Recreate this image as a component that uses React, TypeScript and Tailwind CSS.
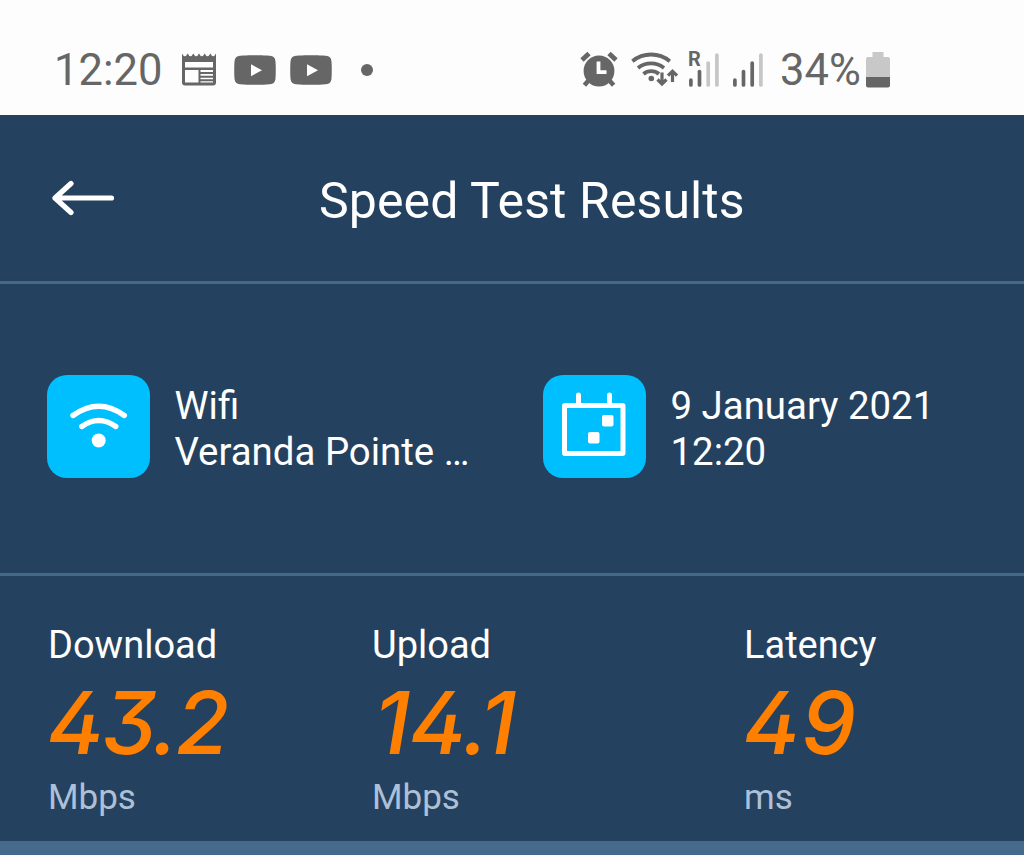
import type { ReactNode } from 'react';

type Metric = {
    label: string;
    value: string;
    unit: string;
    width: string;
    valueClass: string;
};

const metrics: Metric[] = [
    { label: 'Download', value: '43.2', unit: 'Mbps', width: 'w-[324px]', valueClass: '-ml-px tracking-[-2.5px]' },
    { label: 'Upload', value: '14.1', unit: 'Mbps', width: 'w-[372px]', valueClass: 'pl-[2px] tracking-[-1px]' },
    { label: 'Latency', value: '49', unit: 'ms', width: 'w-[220px]', valueClass: '-ml-px tracking-[1px]' },
];

function NewsIcon() {
    return (
        <svg width="34" height="33" viewBox="0 0 34 33" fill="#666">
            <path
                fillRule="evenodd"
                d="M0 .5Q2.800 6 5.700 .5 8.500 6 11.300 .5 14.200 6 17 .5 19.800 6 22.700 .5 25.500 6 28.300 .5 31.200 6 34 .5V29.500a3 3 0 0 1-3 3H3a3 3 0 0 1-3-3zM3 9v5.500h28V9zM3 17v12.500h13.500V17zM18.500 17v2H31V17zM18.500 21v1.700H31V21zM18.500 24.700v1.600H31v-1.600zM18.500 28.200v1.300H31v-1.300z"
            />
        </svg>
    );
}

function VideoIcon() {
    return (
        <svg width="42" height="30" viewBox="0 0 42 30">
            <path
                fill="#666"
                d="M6 .8C11 .1 31 .1 36 .8c3.500.5 5 2 5.400 5 .5 4 .5 14.400 0 18.400-.4 3-1.900 4.500-5.400 5-5 .7-25 .7-30 0-3.500-.5-5-2-5.400-5-.5-4-.5-14.400 0-18.400C1 2.800 2.500 1.300 6 .8z"
            />
            <path fill="#fff" d="M17 9.300l11 5.900-11 6z" />
        </svg>
    );
}

function AlarmIcon() {
    return (
        <svg width="38" height="37" viewBox="0 0 38 37" fill="none" stroke="#666">
            <circle cx="19" cy="20" r="15.400" fill="#666" stroke="none" />
            <path d="M2 9l7-6.600M36 9l-7-6.600" strokeWidth="4.800" />
            <path d="M9 29l-4.600 5.200M29 29l4.600 5.200" strokeWidth="4.600" />
            <path d="M18.500 10.500v10.700h8" stroke="#fff" strokeWidth="3.800" />
        </svg>
    );
}

function WifiStatusIcon() {
    return (
        <svg width="48" height="37" viewBox="0 0 48 37" fill="none" stroke="#666" strokeWidth="3.800">
            <path d="M1.400 10.200a29.500 29.500 0 0 1 37.400 0" />
            <path d="M7 17a20.500 20.500 0 0 1 26 0" />
            <path d="M12.500 23a12 12 0 0 1 15.400 0" />
            <circle cx="20.300" cy="27.500" r="2.800" fill="#666" stroke="none" />
            <path d="M31 21.500v11.500M26.500 28.500l4.500 4.500 4.500-4.500" strokeWidth="3.200" />
            <path d="M41.500 31V20.500M37 24.700l4.500-4.500 4.500 4.500" strokeWidth="3.200" />
        </svg>
    );
}

function SignalBars({ active }: { active: number }) {
    const bars = [
        { x: 1.9, top: 28 },
        { x: 10.5, top: 19.5 },
        { x: 19.2, top: 11 },
        { x: 27.9, top: 3 },
    ];

    return (
        <svg width="32" height="36" viewBox="0 0 32 36" strokeWidth="3.700" strokeLinecap="round">
            {bars.map((bar, i) => (
                <path
                    key={bar.x}
                    d={`M${bar.x} 33V${bar.top}`}
                    stroke={i < active ? '#666' : '#c6c6c6'}
                />
            ))}
        </svg>
    );
}

function BatteryIcon() {
    return (
        <svg width="24" height="36" viewBox="0 0 24 36">
            <path fill="#c8c8c8" d="M6.500 0h11v5H22a2 2 0 0 1 2 2v18H0V7a2 2 0 0 1 2-2h4.500z" />
            <path fill="#666" d="M0 25h24v8.500a2 2 0 0 1-2 2H2a2 2 0 0 1-2-2z" />
        </svg>
    );
}

function StatusBar() {
    return (
        <div className="flex h-[115px] items-center bg-[#fdfdfd] pt-[24px] pl-[54px] text-[#666]">
            <span className="w-[128px] pt-[2px] text-[43.5px] leading-none">12:20</span>
            <NewsIcon />
            <div className="ml-[18px] flex gap-[14px]">
                <VideoIcon />
                <VideoIcon />
            </div>
            <span className="ml-[29px] size-3 rounded-full bg-[#666]" />
            <div className="ml-[207px] flex items-center">
                <AlarmIcon />
                <div className="ml-[13px]">
                    <WifiStatusIcon />
                </div>
                <div className="relative ml-[10px]">
                    <span className="absolute -top-[3px] -left-[1px] text-[20px] leading-none font-bold">
                        R
                    </span>
                    <SignalBars active={2} />
                </div>
                <div className="ml-[12px]">
                    <SignalBars active={3} />
                </div>
                <span className="ml-[15px] w-[86px] pt-[2px] text-[43.5px] leading-none">34%</span>
                <BatteryIcon />
            </div>
        </div>
    );
}

function Header() {
    return (
        <header className="flex h-[169px] items-center border-b-[3px] border-[#44698b] pl-[50px]">
            <svg
                width="66"
                height="38"
                viewBox="0 0 66 38"
                fill="none"
                stroke="#fff"
                strokeWidth="5.200"
                strokeLinecap="round"
                strokeLinejoin="round"
            >
                <path d="M61.500 19H5M21 4.500L5 19l16 14.500" />
            </svg>
            <h1 className="ml-[203px] pt-[5px] text-[50px] leading-none tracking-[0.1px] whitespace-nowrap">
                Speed Test Results
            </h1>
        </header>
    );
}

function InfoItem({
    icon,
    title,
    detail,
    className,
}: {
    icon: ReactNode;
    title: string;
    detail: string;
    className?: string;
}) {
    return (
        <div className={`flex items-center ${className ?? ''}`}>
            <div className="size-[103px] shrink-0 rounded-[20px] bg-[#00bfff]">{icon}</div>
            <div className="ml-[24.5px] pt-[4px] text-[38.4px] leading-[45.5px] whitespace-nowrap">
                <p>{title}</p>
                <p>{detail}</p>
            </div>
        </div>
    );
}

function WifiIcon() {
    return (
        <svg viewBox="0 0 103 103" fill="none" stroke="#fff" strokeWidth="5.400" strokeLinecap="round">
            <path d="M26 40.500q25.800-18.500 51.300 0" />
            <path d="M34.800 51.500q17-12 34 0" />
            <circle cx="51.700" cy="65.500" r="7" fill="#fff" stroke="none" />
        </svg>
    );
}

function CalendarIcon() {
    return (
        <svg viewBox="0 0 103 103" fill="none" stroke="#fff" strokeWidth="5" strokeLinecap="round">
            <rect x="21.500" y="30.500" width="58.500" height="48" rx="0.5" strokeLinejoin="round" />
            <path d="M35.500 20v10M66.500 20v10" />
            <rect x="59" y="40" width="11.500" height="11.500" rx="2" fill="#fff" stroke="none" />
            <rect x="45" y="57" width="11.500" height="11.500" rx="2" fill="#fff" stroke="none" />
        </svg>
    );
}

function MetricColumn({ metric }: { metric: Metric }) {
    return (
        <div className={`flex flex-col ${metric.width}`}>
            <span className="text-[38px] leading-[46px]">{metric.label}</span>
            <span
                className={`mt-[12px] font-['Inter'] text-[87px] leading-[86px] font-medium text-[#ff7f00] italic [font-feature-settings:'cv09','cv02'] ${metric.valueClass}`}
            >
                {metric.value}
            </span>
            <span className="mt-[11px] text-[35px] leading-[42px] text-[#adc0d8]">{metric.unit}</span>
        </div>
    );
}

export default function App() {
    return (
        <div className="flex h-[855px] w-[1024px] flex-col overflow-hidden bg-[#24425f] font-['Roboto',sans-serif] text-white">
            <StatusBar />
            <Header />
            <section className="flex h-[292px] items-start border-b-[3px] border-[#44698b] pt-[91px] pl-[47px]">
                <InfoItem
                    className="w-[496px]"
                    icon={<WifiIcon />}
                    title="Wifi"
                    detail="Veranda Pointe …"
                />
                <InfoItem icon={<CalendarIcon />} title="9 January 2021" detail="12:20" />
            </section>
            <section className="flex h-[265px] pt-[46px] pl-[48px]">
                {metrics.map((metric) => (
                    <MetricColumn key={metric.label} metric={metric} />
                ))}
            </section>
            <div className="flex-1 bg-[#456a8c]" />
        </div>
    );
}
